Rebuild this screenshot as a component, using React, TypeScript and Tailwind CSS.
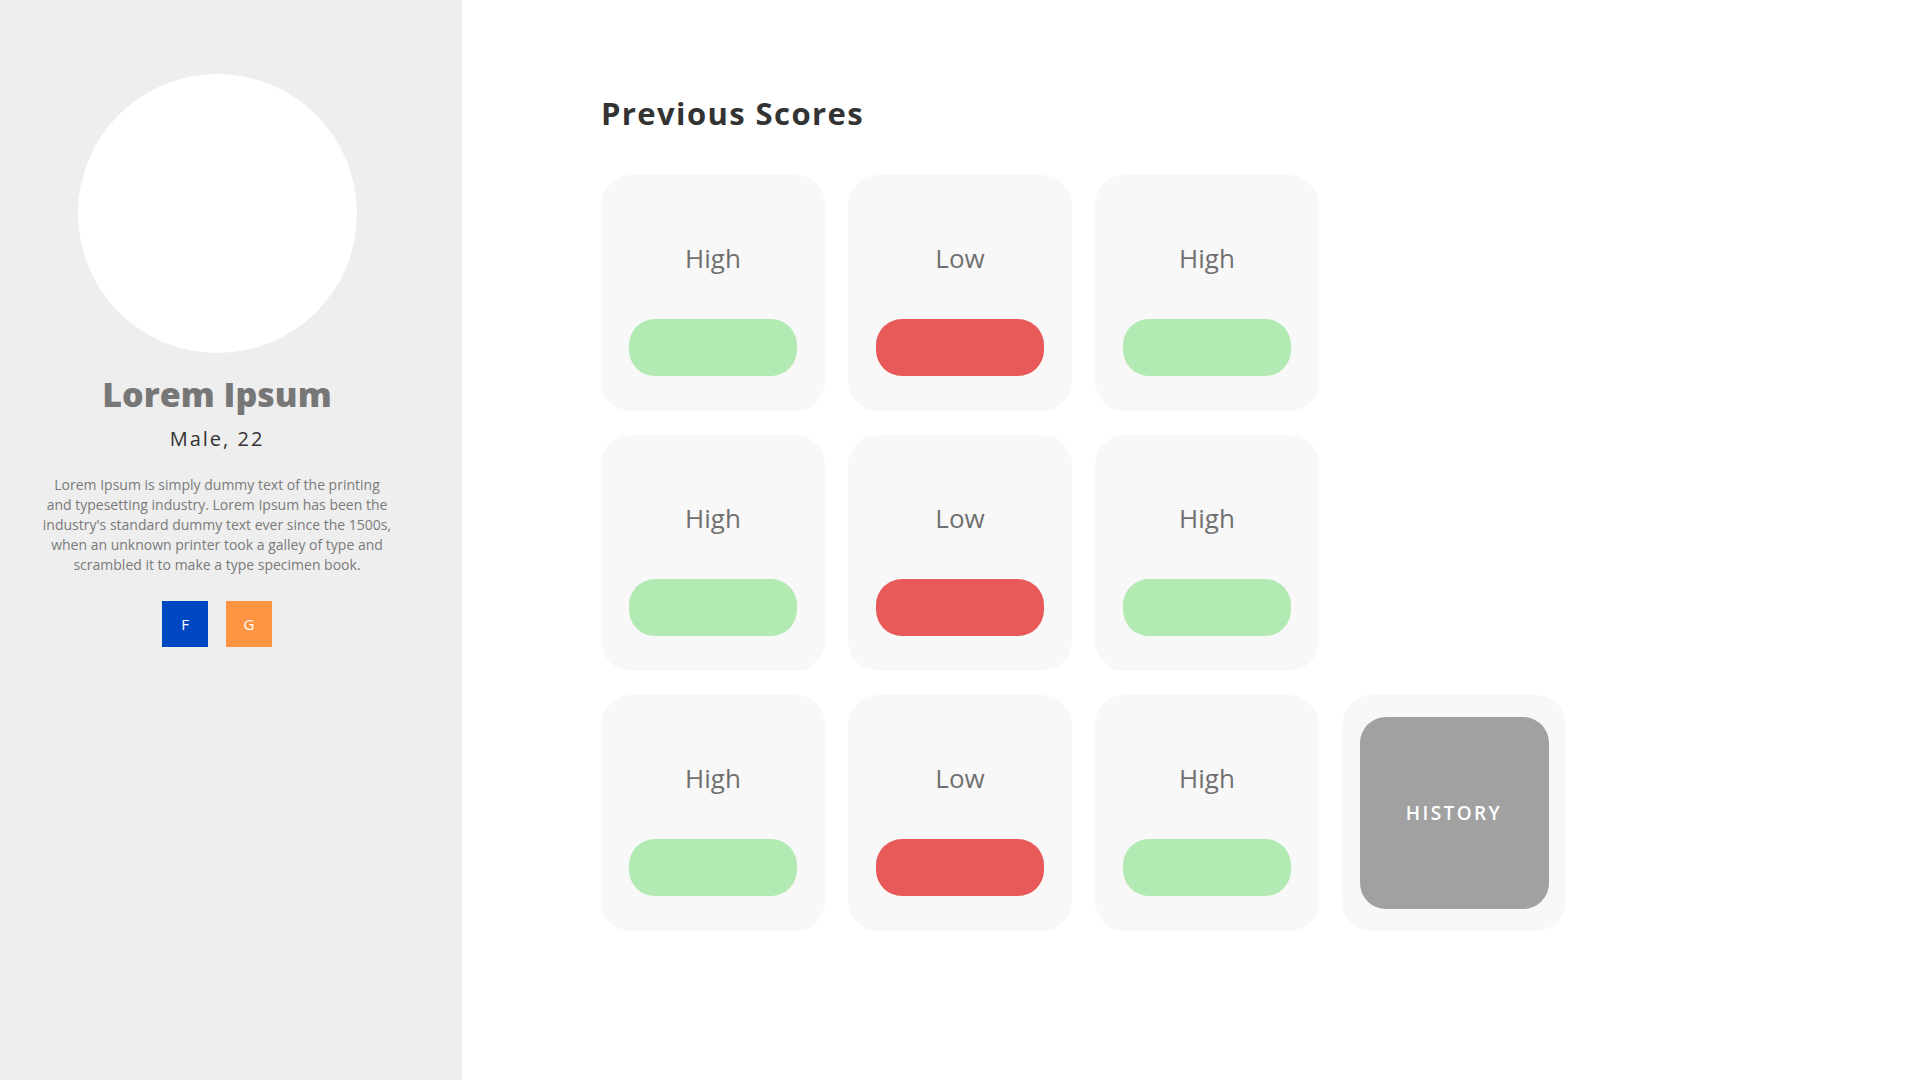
const scores = [
  "High", "Low", "High",
  "High", "Low", "High",
  "High", "Low", "High",
];

function ScoreCard({ label }: { label: string }) {
  const high = label === "High";
  return (
    <div className="flex h-[236px] w-[224px] flex-col items-center rounded-[30px] bg-[#f8f8f8] pt-[64px]">
      <p className="text-[26px] leading-[38px] text-[#707070]">{label}</p>
      <div
        className={
          high
            ? "mt-[42px] h-[57px] w-[168px] rounded-[26px] bg-[#b3e9b3]"
            : "mt-[42px] h-[57px] w-[168px] rounded-[26px] bg-[#e85a5a]"
        }
      />
    </div>
  );
}

export default function App() {
  return (
    <div className="flex min-h-screen bg-white font-['Open_Sans',sans-serif]">
      <aside className="flex w-[462px] shrink-0 flex-col items-center bg-[#eeeeee] pr-[28px]">
        <div className="mt-[74px] h-[279px] w-[279px] rounded-full bg-white" />
        <h1 className="mt-[19px] text-[34px] font-extrabold leading-[44px] text-[#777777]">Lorem Ipsum</h1>
        <p className="mt-[9px] text-[20px] leading-[28px] tracking-[2px] text-[#333333]">Male, 22</p>
        <p className="mt-[22px] text-center text-[14px] leading-[20px] text-[#7a7a7a]">
          Lorem Ipsum is simply dummy text of the printing
          <br />
          and typesetting industry. Lorem Ipsum has been the
          <br />
          industry's standard dummy text ever since the 1500s,
          <br />
          when an unknown printer took a galley of type and
          <br />
          scrambled it to make a type specimen book.
        </p>
        <div className="mt-[26px] flex gap-[18px]">
          <a className="flex h-[46px] w-[46px] items-center justify-center bg-[#0047c3] text-[15px] text-white">F</a>
          <a className="flex h-[46px] w-[46px] items-center justify-center bg-[#ff9543] text-[15px] text-white">G</a>
        </div>
      </aside>

      <main className="flex-1 pl-[139px] pt-[93px]">
        <h2 className="text-[31px] font-bold leading-[40px] tracking-[1.4px] text-[#333333]">Previous Scores</h2>
        <div className="mt-[42px] grid grid-cols-[repeat(4,224px)] gap-x-[23px] gap-y-[24px]">
          {scores.slice(0, 3).map((s, i) => (
            <ScoreCard key={"a" + i} label={s} />
          ))}
          <div />
          {scores.slice(3, 6).map((s, i) => (
            <ScoreCard key={"b" + i} label={s} />
          ))}
          <div />
          {scores.slice(6).map((s, i) => (
            <ScoreCard key={"c" + i} label={s} />
          ))}
          <div className="flex h-[236px] w-[224px] items-center justify-center rounded-[30px] bg-[#f8f8f8]">
            <button className="flex h-[192px] w-[189px] items-center justify-center rounded-[26px] bg-[#a1a1a1] text-[19px] font-semibold tracking-[2.4px] text-white">
              HISTORY
            </button>
          </div>
        </div>
      </main>
    </div>
  );
}
